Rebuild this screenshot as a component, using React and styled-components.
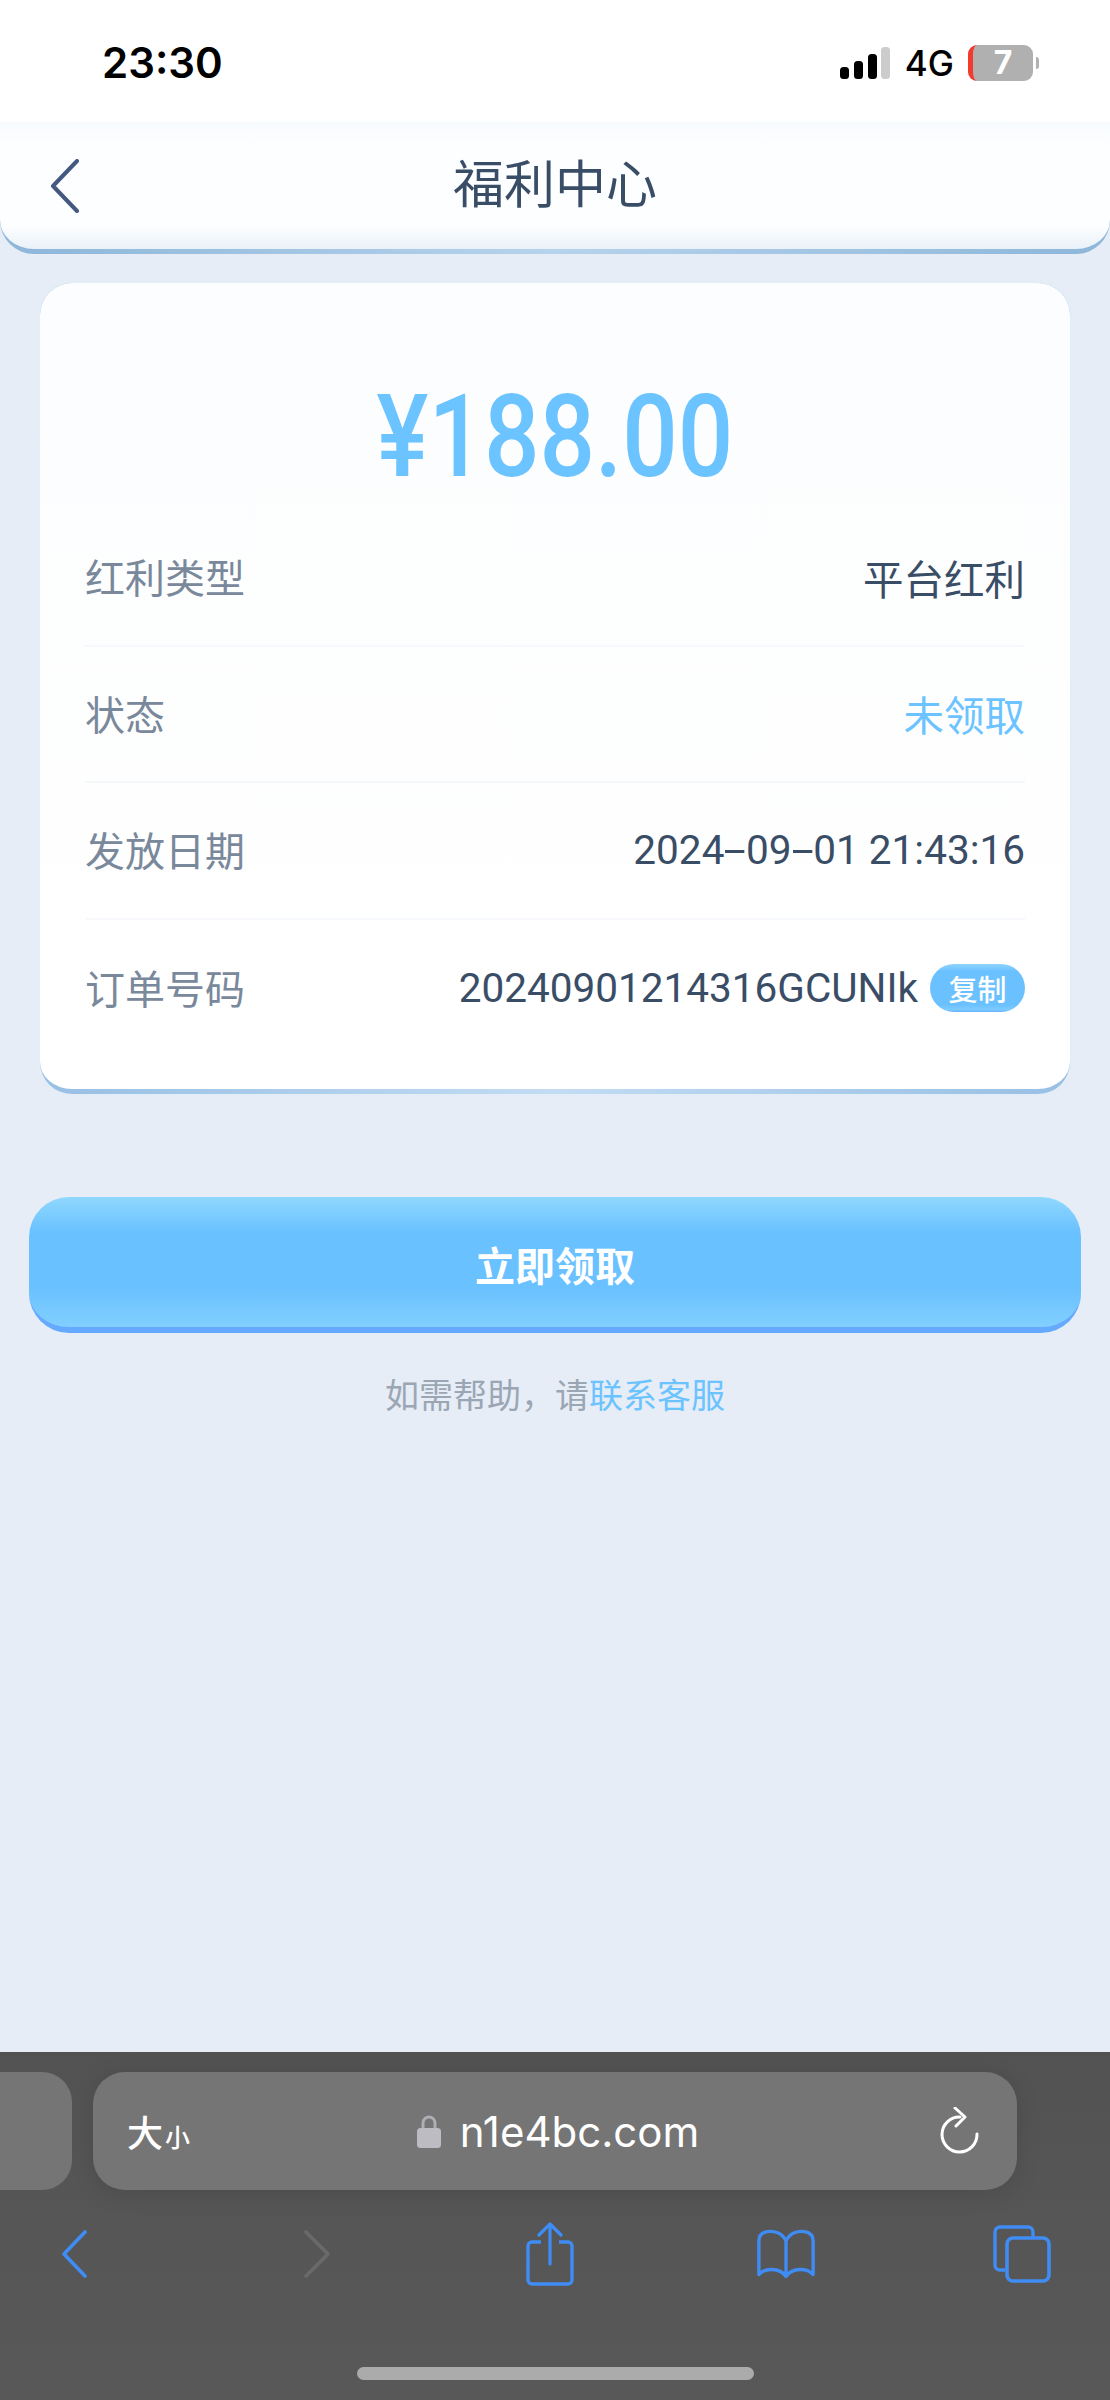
import styled, { createGlobalStyle } from 'styled-components';

const CJK = `Roboto, "Noto Sans CJK SC", sans-serif`;

const GlobalStyle = createGlobalStyle`
  html, body { margin: 0; padding: 0; background: #e6edf6; }
  * { box-sizing: border-box; }
  body { font-family: ${CJK}; }
`;

const rows = [
  { label: '红利类型', value: '平台红利' },
  { label: '状态', value: '未领取', accent: true },
  { label: '发放日期', value: '2024-09-01 21:43:16' },
  { label: '订单号码', value: '20240901214316GCUNIk', copy: true },
];

// the hyphens in the date are drawn much wider in the screenshot
const withDashes = (text) =>
  text.split('-').flatMap((part, i) => (i === 0 ? [part] : [<Dash key={i}>-</Dash>, part]));

const App = () => (
  <Page>
    <GlobalStyle />
    <StatusBar>
      <Time>23:30</Time>
      <StatusIcons>
        <svg width="50" height="32" viewBox="0 0 50 32">
          <rect x="0" y="20" width="9" height="12" rx="3.5" fill="#000" />
          <rect x="14" y="14" width="9" height="18" rx="3.5" fill="#000" />
          <rect x="28" y="7" width="9" height="25" rx="3.5" fill="#000" />
          <rect x="41" y="0" width="9" height="32" rx="3.5" fill="#ccc" />
        </svg>
        <Network>4G</Network>
        <Battery>7</Battery>
        <BatteryNub />
      </StatusIcons>
    </StatusBar>

    <NavBar>
      <BackButton>
        <svg width="30" height="54" viewBox="0 0 30 54" fill="none">
          <path d="M27 2 L3 27 L27 52" stroke="#44597f" strokeWidth="4" strokeLinejoin="round" strokeLinecap="round" />
        </svg>
      </BackButton>
      <Title>福利中心</Title>
    </NavBar>

    <Content>
      <Card>
        <Amount>
          <AmountText>¥188.00</AmountText>
        </Amount>
        {rows.map((row, i) => (
          <Row key={row.label} $last={i === rows.length - 1}>
            <Label>{row.label}</Label>
            <Value $accent={row.accent}>
              <span>{withDashes(row.value)}</span>
              {row.copy && <CopyBadge>复制</CopyBadge>}
            </Value>
          </Row>
        ))}
      </Card>

      <ClaimButton>立即领取</ClaimButton>

      <Help>
        如需帮助，请<HelpLink>联系客服</HelpLink>
      </Help>
    </Content>

    <Browser>
      <TabRow>
        <PrevTab />
        <UrlBar>
          <TextSize>
            大<small>小</small>
          </TextSize>
          <Address>
            <svg width="24" height="34" viewBox="0 0 24 34" fill="none">
              <path d="M6 15 V9 a6 6 0 0 1 12 0 V15" stroke="#aeaeb4" strokeWidth="3" />
              <rect x="0" y="14" width="24" height="20" rx="3.5" fill="#bcbcc2" />
            </svg>
            <Url>n1e4bc.com</Url>
          </Address>
          <svg width="40" height="48" viewBox="0 0 40 48" fill="none">
            <path d="M20 10 A17.5 17.5 0 1 0 37 27" stroke="#fff" strokeWidth="3" strokeLinecap="round" />
            <path d="M15 1 L25 10 L16 19" stroke="#fff" strokeWidth="3" strokeLinecap="round" strokeLinejoin="round" />
          </svg>
        </UrlBar>
      </TabRow>

      <Toolbar>
        <ToolSlot>
          <svg width="26" height="48" viewBox="0 0 26 48" fill="none">
            <path d="M24 2 L3 24 L24 46" stroke="#3f8cf5" strokeWidth="3.6" strokeLinecap="round" strokeLinejoin="round" />
          </svg>
        </ToolSlot>
        <ToolSlot>
          <svg width="28" height="48" viewBox="0 0 28 48" fill="none">
            <path d="M3 2 L25 24 L3 46" stroke="#6a6a6a" strokeWidth="3.6" strokeLinecap="round" strokeLinejoin="round" />
          </svg>
        </ToolSlot>
        <ToolSlot>
          <svg width="48" height="64" viewBox="0 0 48 64" fill="none">
            <path d="M15 20 H6 a4 4 0 0 0 -4 4 V58 a4 4 0 0 0 4 4 H42 a4 4 0 0 0 4 -4 V24 a4 4 0 0 0 -4 -4 H33" stroke="#3f8cf5" strokeWidth="3.4" />
            <path d="M24 2 V42 M13 13 L24 2 L35 13" stroke="#3f8cf5" strokeWidth="3.2" strokeLinecap="round" strokeLinejoin="round" />
          </svg>
        </ToolSlot>
        <ToolSlot>
          <svg width="62" height="52" viewBox="0 0 62 52" fill="none">
            <path d="M31 12 C27 3 18 1 11 2 C5 3 2 7 2 12 V48 C8 41 24 40 31 50 C38 40 54 41 60 48 V12 C60 7 57 3 51 2 C44 1 35 3 31 12 Z M31 12 V50" stroke="#3f8cf5" strokeWidth="3.6" strokeLinejoin="round" />
          </svg>
        </ToolSlot>
        <ToolSlot>
          <svg width="58" height="58" viewBox="0 0 58 58" fill="none">
            <path d="M12 45 H7 a5 5 0 0 1 -5 -5 V7 a5 5 0 0 1 5 -5 H35 a5 5 0 0 1 5 5 V13" stroke="#3f8cf5" strokeWidth="3.4" />
            <rect x="14" y="13" width="42" height="43" rx="6" stroke="#3f8cf5" strokeWidth="3.6" />
          </svg>
        </ToolSlot>
      </Toolbar>

      <HomeIndicator />
    </Browser>
  </Page>
);

export default App;

const Page = styled.div`
  width: 1110px;
  height: 2400px;
  display: flex;
  flex-direction: column;
  background: #e6edf6;
  overflow: hidden;
`;

const StatusBar = styled.header`
  height: 122px;
  flex: none;
  background: #fff;
  display: flex;
  align-items: flex-start;
  justify-content: space-between;
  padding: 42px 71px 0 102px;
`;

const Time = styled.div`
  font-family: Inter, sans-serif;
  font-size: 42px;
  line-height: 42px;
  font-weight: 600;
  color: #000;
`;

const StatusIcons = styled.div`
  display: flex;
  align-items: center;
  height: 36px;
  margin-top: 3px;
`;

const Network = styled.div`
  font-family: Inter, sans-serif;
  font-size: 35px;
  font-weight: 500;
  color: #000;
  margin: 0 14px 0 15px;
`;

const Battery = styled.div`
  width: 65px;
  height: 36px;
  border-radius: 9px;
  background: #b0b0b0;
  border-left: 5px solid #f4392f;
  color: #fff;
  font-family: Inter, sans-serif;
  font-size: 32px;
  font-weight: 700;
  line-height: 36px;
  text-align: center;
`;

const BatteryNub = styled.div`
  width: 3px;
  height: 12px;
  margin-left: 3px;
  border-radius: 0 3px 3px 0;
  background: #b0b0b0;
`;

const NavBar = styled.nav`
  height: 132px;
  flex: none;
  display: grid;
  grid-template-columns: 1fr auto 1fr;
  align-items: center;
  border-bottom: 5px solid transparent;
  border-radius: 0 0 34px 34px;
  background:
    linear-gradient(180deg, #f8fbfe 0%, #fdfeff 20%, #fdfeff 82%, #e9f1f8 100%) padding-box,
    linear-gradient(90deg, #8db6d9, #b6d3ec 50%, #8db6d9) border-box;
`;

const BackButton = styled.div`
  padding-left: 50px;
  display: flex;
`;

const Title = styled.h1`
  margin: 0;
  font-size: 51px;
  line-height: 60px;
  font-weight: 400;
  color: #3a4d66;
`;

const Content = styled.main`
  flex: 1;
  padding: 29px 29px 0;
  display: flex;
  flex-direction: column;
`;

const Card = styled.section`
  margin: 0 11px;
  padding: 0 45px 34px;
  height: 811px;
  border-bottom: 5px solid transparent;
  border-radius: 32px;
  background:
    linear-gradient(180deg, #fcfdfe 0%, #fff 100%) padding-box,
    linear-gradient(90deg, #97bfe4, #c2dcf3 50%, #97bfe4) border-box;
  box-shadow: 0 0 4px rgba(225, 238, 250, 0.9);
`;

const Amount = styled.div`
  height: 227px;
  padding-top: 96px;
  display: flex;
  justify-content: center;
`;

const AmountText = styled.div`
  font-family: Roboto, sans-serif;
  font-size: 115px;
  line-height: 115px;
  font-weight: 500;
  color: #6bc3ff;
  transform: scaleX(0.85);
`;

const Row = styled.div`
  height: 136.5px;
  display: flex;
  align-items: center;
  justify-content: space-between;
  border-bottom: ${(p) => (p.$last ? 'none' : '2px solid #f6f8fb')};
`;

const Label = styled.div`
  font-size: 40px;
  padding-bottom: 2px;
  color: #79889b;
`;

const Value = styled.div`
  display: flex;
  align-items: center;
  font-size: 40.5px;
  color: ${(p) => (p.$accent ? '#6bc3ff' : '#3a4d66')};
`;

const Dash = styled.span`
  display: inline-block;
  width: 0.535em;
  text-align: center;
  transform: scaleX(2);
`;

const CopyBadge = styled.span`
  width: 95px;
  height: 48px;
  margin-left: 12px;
  display: flex;
  align-items: center;
  justify-content: center;
  border-radius: 24px;
  font-size: 29px;
  font-weight: 500;
  color: #fff;
  background: linear-gradient(180deg, #8ed4ff 0%, #6bc1ff 15%, #6bc1ff 85%, #7ccbff 95%, #66b0ff 100%);
`;

const ClaimButton = styled.button`
  margin-top: 103px;
  width: 1052px;
  height: 136px;
  padding: 3px 0 0;
  border: none;
  border-bottom: 6px solid #66aaff;
  border-radius: 40px;
  font-family: inherit;
  font-size: 40px;
  font-weight: 700;
  color: #fff;
  background: linear-gradient(180deg, #90d8ff 0%, #69c1ff 27%, #69c1ff 70%, #82cfff 100%);
`;

const Help = styled.p`
  margin: 41px 0 0;
  text-align: center;
  font-size: 34px;
  line-height: 44px;
  color: #9ba6b4;
`;

const HelpLink = styled.span`
  color: #6bc3ff;
`;

const Browser = styled.footer`
  height: 348px;
  flex: none;
  background: linear-gradient(180deg, #525252 0%, #555 30%, #585858 100%);
  padding-top: 20px;
`;

const TabRow = styled.div`
  display: flex;
  gap: 21px;
`;

const PrevTab = styled.div`
  width: 72px;
  height: 118px;
  border-radius: 0 30px 30px 0;
  background: #757575;
`;

const UrlBar = styled.div`
  width: 924px;
  height: 118px;
  padding: 0 37px 0 34px;
  border-radius: 32px;
  background: #757575;
  box-shadow: 0 4px 24px rgba(0, 0, 0, 0.12);
  display: flex;
  align-items: center;
  justify-content: space-between;
`;

const TextSize = styled.div`
  width: 64px;
  font-size: 36px;
  font-weight: 500;
  color: #fff;
  small {
    font-size: 25px;
    margin-left: 2px;
  }
`;

const Address = styled.div`
  display: flex;
  align-items: center;
  gap: 19px;
  margin-right: 15px;
`;

const Url = styled.span`
  font-family: Inter, sans-serif;
  font-size: 42px;
  color: #fff;
`;

const Toolbar = styled.div`
  margin-top: 29px;
  padding-left: 45px;
  display: grid;
  grid-template-columns: 243px 233px 236px 236px 58px;
  align-items: center;
  height: 70px;
`;

const ToolSlot = styled.div`
  width: 58px;
  display: flex;
  justify-content: center;
`;

const HomeIndicator = styled.div`
  width: 397px;
  height: 13px;
  margin: 78px auto 0;
  border-radius: 7px;
  background: #ababab;
`;
